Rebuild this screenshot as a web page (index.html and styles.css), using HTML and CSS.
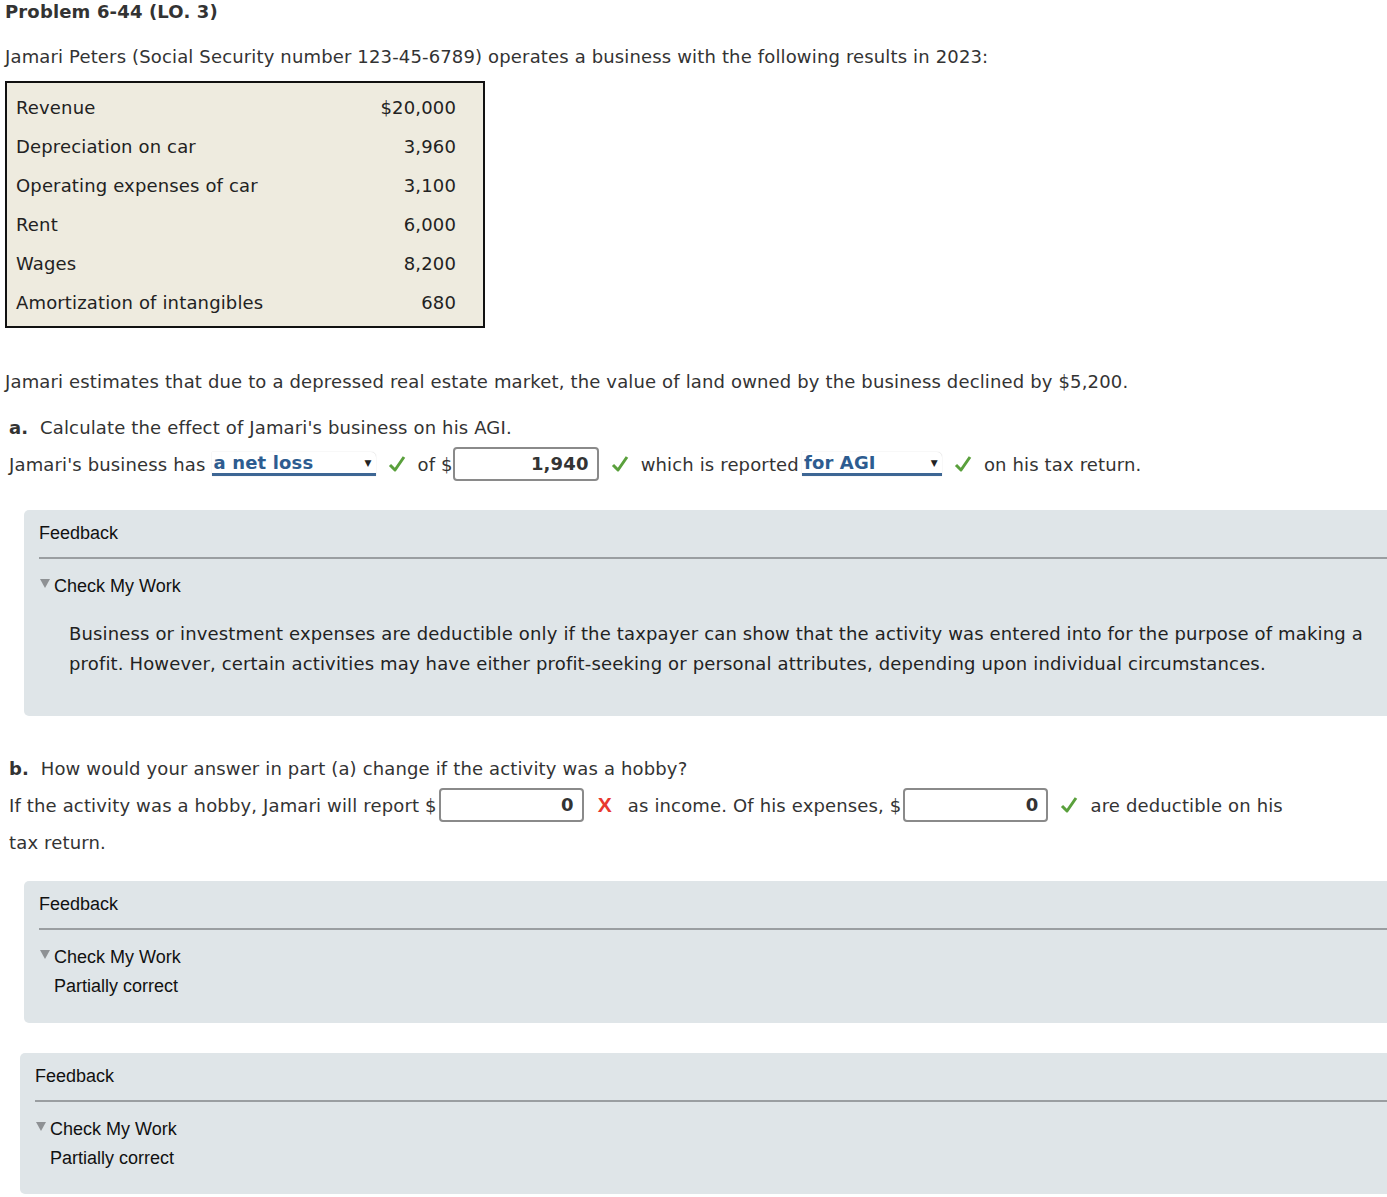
FILE: index.html
```html
<!DOCTYPE html>
<html>
<head>
<meta charset="utf-8">
<link rel="stylesheet" href="styles.css">
</head>
<body>
<div class="page">
  <h1 class="title">Problem 6-44 (LO. 3)</h1>
  <p class="intro">Jamari Peters (Social Security number 123-45-6789) operates a business with the following results in 2023:</p>
  <table class="data">
    <tr><td>Revenue</td><td class="num">$20,000</td></tr>
    <tr><td>Depreciation on car</td><td class="num">3,960</td></tr>
    <tr><td>Operating expenses of car</td><td class="num">3,100</td></tr>
    <tr><td>Rent</td><td class="num">6,000</td></tr>
    <tr><td>Wages</td><td class="num">8,200</td></tr>
    <tr><td>Amortization of intangibles</td><td class="num">680</td></tr>
  </table>
  <p class="estimate">Jamari estimates that due to a depressed real estate market, the value of land owned by the business declined by $5,200.</p>

  <p class="part-q"><b>a.</b>&nbsp; Calculate the effect of Jamari's business on his AGI.</p>
  <div class="answer-line">
    <span>Jamari's business has</span>
    <span class="sel sel-a"><span class="sel-text">a net loss</span><span class="sel-arrow">&#9660;</span></span>
    <svg class="check" viewBox="0 0 18 18"><path d="M2 10 L7 15 L16 2" fill="none" stroke="#5aa03c" stroke-width="3" stroke-linejoin="round"/></svg>
    <span class="gap">of $</span><span class="inp inp-a">1,940</span>
    <svg class="check" viewBox="0 0 18 18"><path d="M2 10 L7 15 L16 2" fill="none" stroke="#5aa03c" stroke-width="3" stroke-linejoin="round"/></svg>
    <span class="gap">which is reported</span>
    <span class="sel sel-b"><span class="sel-text">for AGI</span><span class="sel-arrow">&#9660;</span></span>
    <svg class="check" viewBox="0 0 18 18"><path d="M2 10 L7 15 L16 2" fill="none" stroke="#5aa03c" stroke-width="3" stroke-linejoin="round"/></svg>
    <span class="gap">on his tax return.</span>
  </div>

  <div class="feedback fb1">
    <div class="fb-head">Feedback</div>
    <div class="fb-body">
      <div class="cmw"><span class="tri"></span>Check My Work</div>
      <p class="fb-text">Business or investment expenses are deductible only if the taxpayer can show that the activity was entered into for the purpose of making a profit. However, certain activities may have either profit-seeking or personal attributes, depending upon individual circumstances.</p>
    </div>
  </div>

  <p class="part-q part-b"><b>b.</b>&nbsp; How would your answer in part (a) change if the activity was a hobby?</p>
  <div class="answer-line line-b">
    <span>If the activity was a hobby, Jamari will report $</span><span class="inp inp-b">0</span>
    <span class="xmark">X</span>
    <span class="gap gap-x">as income. Of his expenses, $</span><span class="inp inp-b">0</span>
    <svg class="check" viewBox="0 0 18 18"><path d="M2 10 L7 15 L16 2" fill="none" stroke="#5aa03c" stroke-width="3" stroke-linejoin="round"/></svg>
    <span class="gap">are deductible on his</span>
  </div>
  <div class="tail">tax return.</div>

  <div class="feedback fb2">
    <div class="fb-head">Feedback</div>
    <div class="fb-body">
      <div class="cmw"><span class="tri"></span>Check My Work</div>
      <div class="partial">Partially correct</div>
    </div>
  </div>

  <div class="feedback fb3">
    <div class="fb-head">Feedback</div>
    <div class="fb-body">
      <div class="cmw"><span class="tri"></span>Check My Work</div>
      <div class="partial">Partially correct</div>
    </div>
  </div>
</div>
</body>
</html>
```

FILE: styles.css
```css
html, body {
  margin: 0;
  padding: 0;
  background: #fff;
  overflow-x: hidden;
}
body {
  font-family: "DejaVu Sans", Verdana, sans-serif;
  font-size: 18px;
  letter-spacing: 0.15px;
  color: #333;
}
.page {
  padding: 0 0 0 5px;
}
.title {
  margin: 0;
  font-size: 18px;
  font-weight: bold;
  line-height: 24px;
  color: #333;
}
.intro {
  margin: 21px 0 0 0;
  line-height: 24px;
}
.data {
  margin-top: 12px;
  border: 2px solid #111;
  background: #eeebdf;
  border-collapse: separate;
  border-spacing: 0;
  width: 480px;
  padding: 5px 0 4px 0;
}
.data td {
  height: 39px;
  padding: 0 9px;
  color: #222;
}
.data td.num {
  text-align: right;
  padding-right: 27px;
}
.estimate {
  margin: 42px 0 0 0;
  line-height: 24px;
}
.part-q {
  margin: 22px 0 0 4px;
  line-height: 24px;
}
.answer-line {
  display: flex;
  align-items: center;
  margin: 6px 0 0 4px;
  height: 36px;
  white-space: nowrap;
}
.gap { margin-left: 12px; }
.gap-x { margin-left: 16px; }
.sel {
  display: inline-flex;
  align-items: center;
  justify-content: space-between;
  background: #fff;
  border-bottom: 3px solid #3d6694;
  border-radius: 0 5px 0 0;
  height: 24px;
  margin-left: 6px;
  padding: 0 4px 0 2px;
  box-sizing: border-box;
  box-shadow: 0 0 1px #bbb;
}
.sel-a { width: 164px; }
.sel-b { width: 140px; margin-left: 3px; }
.sel-text {
  color: #2d5c90;
  font-weight: bold;
}
.sel-arrow {
  font-size: 9px;
  color: #222;
}
.check {
  width: 18px;
  height: 18px;
  margin-left: 12px;
}
.inp {
  display: inline-block;
  background: #fff;
  border: 2px solid #8a8a8a;
  border-radius: 4px;
  height: 34px;
  line-height: 30px;
  box-sizing: border-box;
  text-align: right;
  font-weight: bold;
  padding-right: 8px;
  color: #333;
}
.inp-a { width: 146px; }
.inp-b { width: 145px; margin-left: 2px; }
.xmark {
  color: #e8382f;
  font-weight: bold;
  font-family: "Liberation Sans", Arial, sans-serif;
  font-size: 21px;
  margin-left: 14px;
}
.feedback {
  background: #dfe5e8;
  border-radius: 5px 0 0 5px;
  font-family: "Liberation Sans", Arial, sans-serif;
  letter-spacing: 0;
  color: #111;
}
.fb1 { margin: 28px -20px 0 19px; padding-bottom: 37px; }
.fb2 { margin: 26px -20px 0 19px; padding-bottom: 26px; }
.fb3 { margin: 30px -20px 0 15px; padding-bottom: 25px; }
.fb-head {
  margin-left: 15px;
  padding: 13px 0 14px 0;
  line-height: 20px;
  border-bottom: 2px solid #9a9ea1;
  font-size: 18px;
}
.fb-body {
  padding-left: 15px;
}
.cmw {
  margin-top: 16px;
  line-height: 22px;
  font-size: 18px;
  display: flex;
  align-items: center;
}
.tri {
  width: 0;
  height: 0;
  border-left: 5px solid transparent;
  border-right: 5px solid transparent;
  border-top: 9px solid #8e9194;
  margin: 0 4px 6px 1px;
}
.partial {
  margin-top: 7px;
  margin-left: 15px;
  line-height: 22px;
  font-size: 18px;
}
.fb-text {
  font-family: "DejaVu Sans", Verdana, sans-serif;
  letter-spacing: 0.15px;
  color: #222;
  margin: 22px 20px 0 30px;
  line-height: 30px;
}
.part-b { margin-top: 41px; }
.line-b { margin-top: 6px; }
.tail {
  margin: 8px 0 0 4px;
  line-height: 24px;
}
```
